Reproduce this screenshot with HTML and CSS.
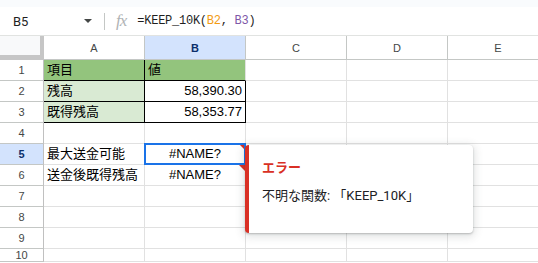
FILE: index.html
```html
<!DOCTYPE html>
<html lang="ja">
<head>
  <meta charset="UTF-8" />
  <title>Sheet</title>
  <link rel="stylesheet" href="styles.css">
</head>
<body>
  <div class="top-strip"></div>

  <div class="formula-bar">
    <div class="name-box">
      <span class="name-text">B5</span>
      <span class="caret"></span>
    </div>
    <div class="separator"></div>
    <span class="fx">fx</span>
    <span class="formula">=KEEP_10K(<span class="ref-orange">B2</span>, <span class="ref-purple">B3</span>)</span>
  </div>

  <div class="sheet">
    <!-- header row -->
    <div class="corner"></div>
    <div class="col-head">A</div>
    <div class="col-head active">B</div>
    <div class="col-head">C</div>
    <div class="col-head">D</div>
    <div class="col-head">E</div>

    <div class="row-head">1</div>
    <div class="cell green b-bottom b-right">項目</div>
    <div class="cell green b-bottom">値</div>
    <div class="cell"></div>
    <div class="cell"></div>
    <div class="cell"></div>

    <div class="row-head">2</div>
    <div class="cell light-green b-bottom b-right">残高</div>
    <div class="cell num b-bottom b-right">58,390.30</div>
    <div class="cell"></div>
    <div class="cell"></div>
    <div class="cell"></div>

    <div class="row-head">3</div>
    <div class="cell light-green b-bottom b-right">既得残高</div>
    <div class="cell num b-bottom b-right">58,353.77</div>
    <div class="cell"></div>
    <div class="cell"></div>
    <div class="cell"></div>

    <div class="row-head">4</div>
    <div class="cell"></div>
    <div class="cell"></div>
    <div class="cell"></div>
    <div class="cell"></div>
    <div class="cell"></div>

    <div class="row-head active">5</div>
    <div class="cell">最大送金可能</div>
    <div class="cell center error selected">#NAME?</div>
    <div class="cell"></div>
    <div class="cell"></div>
    <div class="cell"></div>

    <div class="row-head">6</div>
    <div class="cell">送金後既得残高</div>
    <div class="cell center error">#NAME?</div>
    <div class="cell"></div>
    <div class="cell"></div>
    <div class="cell"></div>

    <div class="row-head">7</div>
    <div class="cell"></div>
    <div class="cell"></div>
    <div class="cell"></div>
    <div class="cell"></div>
    <div class="cell"></div>

    <div class="row-head">8</div>
    <div class="cell"></div>
    <div class="cell"></div>
    <div class="cell"></div>
    <div class="cell"></div>
    <div class="cell"></div>

    <div class="row-head">9</div>
    <div class="cell"></div>
    <div class="cell"></div>
    <div class="cell"></div>
    <div class="cell"></div>
    <div class="cell"></div>

    <div class="row-head">10</div>
    <div class="cell"></div>
    <div class="cell"></div>
    <div class="cell"></div>
    <div class="cell"></div>
    <div class="cell"></div>

    <!-- error popup over the grid -->
    <div class="error-tip">
      <div class="error-title">エラー</div>
      <div class="error-msg">不明な関数: 「KEEP_10K」</div>
    </div>
  </div>
</body>
</html>
```

FILE: styles.css
```css
:root {
  --grid: #e1e1e1;
  --head-line: #c4c7c5;
  --select: #1a73e8;
  --select-bg: #d3e3fd;
  --red: #d93025;
}

html, body {
  margin: 0;
  padding: 0;
  overflow: hidden;
  background: #fff;
  font-family: 'Liberation Sans', Arial, 'Noto Sans CJK JP', sans-serif;
  color: #000;
}

.top-strip {
  height: 7px;
  background: #f9fbfd;
}

.formula-bar {
  height: 28px;
  display: flex;
  align-items: center;
  border-bottom: 1px solid #e1e3e1;
}

.name-box {
  width: 104px;
  display: flex;
  align-items: center;
  padding-left: 13px;
  box-sizing: border-box;
}

.name-text {
  font-family: Roboto, 'Liberation Sans', sans-serif;
  font-size: 13px;
  color: #1f1f1f;
  flex: 1;
}

.caret {
  width: 0;
  height: 0;
  border-left: 4px solid transparent;
  border-right: 4px solid transparent;
  border-top: 4px solid #444746;
  margin-right: 12px;
}

.separator {
  width: 1px;
  height: 17px;
  background: var(--head-line);
}

.fx {
  font-family: 'Liberation Serif', serif;
  font-style: italic;
  font-size: 17px;
  color: #b0b3b5;
  margin-left: 11px;
  margin-right: 11px;
  letter-spacing: -1px;
}

.formula {
  font-family: 'Liberation Mono', monospace;
  font-size: 12px;
  letter-spacing: -0.25px;
  color: #1f1f1f;
}

.ref-orange { color: #f39c12; }
.ref-purple { color: #7e57a8; }

.sheet {
  position: relative;
  display: grid;
  grid-template-columns: 44px repeat(5, 101px);
  grid-template-rows: 24px repeat(9, 21px);
}

.corner {
  background: #f8f9fa;
  border-right: 4px solid #c6c6c6;
  border-bottom: 5px solid #c6c6c6;
}

.col-head,
.row-head {
  display: flex;
  align-items: center;
  justify-content: center;
  font-size: 11px;
  color: #444746;
  border-right: 1px solid var(--head-line);
  border-bottom: 1px solid var(--head-line);
}

.col-head {
  padding-top: 1px;
}

.row-head {
  border-right-color: #c0c0c0;
}

.col-head.active,
.row-head.active {
  background: var(--select-bg);
  color: #0b2f6b;
  font-weight: bold;
}

.cell {
  position: relative;
  border-right: 1px solid var(--grid);
  border-bottom: 1px solid var(--grid);
  padding: 0 3px;
  font-size: 13px;
  line-height: 20px;
  white-space: nowrap;
  overflow: visible;
}

.cell.green { background: #93c47d; }
.cell.light-green { background: #d9ead3; }
.cell.num { text-align: right; }
.cell.center { text-align: center; }
.cell.b-bottom { border-bottom-color: #000; }
.cell.b-right { border-right-color: #000; }

.cell.error::before {
  content: "";
  position: absolute;
  top: 0;
  right: 0;
  border-top: 6px solid var(--red);
  border-left: 6px solid transparent;
}

.cell.selected::after {
  content: "";
  position: absolute;
  top: -1px;
  left: -1px;
  right: -1px;
  bottom: -1px;
  border: 2px solid var(--select);
}

.error-tip {
  position: absolute;
  left: 245px;
  top: 109px;
  width: 228px;
  height: 88px;
  box-sizing: border-box;
  background: #fff;
  border-left: 4px solid var(--red);
  border-radius: 4px;
  box-shadow: 0 1px 2px rgba(60, 64, 67, 0.3), 0 2px 8px 2px rgba(60, 64, 67, 0.15);
  padding: 14px 12px 0 13px;
  z-index: 2;
}

.error-title {
  font-family: Roboto, 'Noto Sans CJK JP', sans-serif;
  font-weight: bold;
  font-size: 13px;
  line-height: 18px;
  color: var(--red);
}

.error-msg {
  margin-top: 10px;
  font-family: Roboto, 'Noto Sans CJK JP', sans-serif;
  font-size: 13px;
  line-height: 18px;
  color: #202124;
}
```
